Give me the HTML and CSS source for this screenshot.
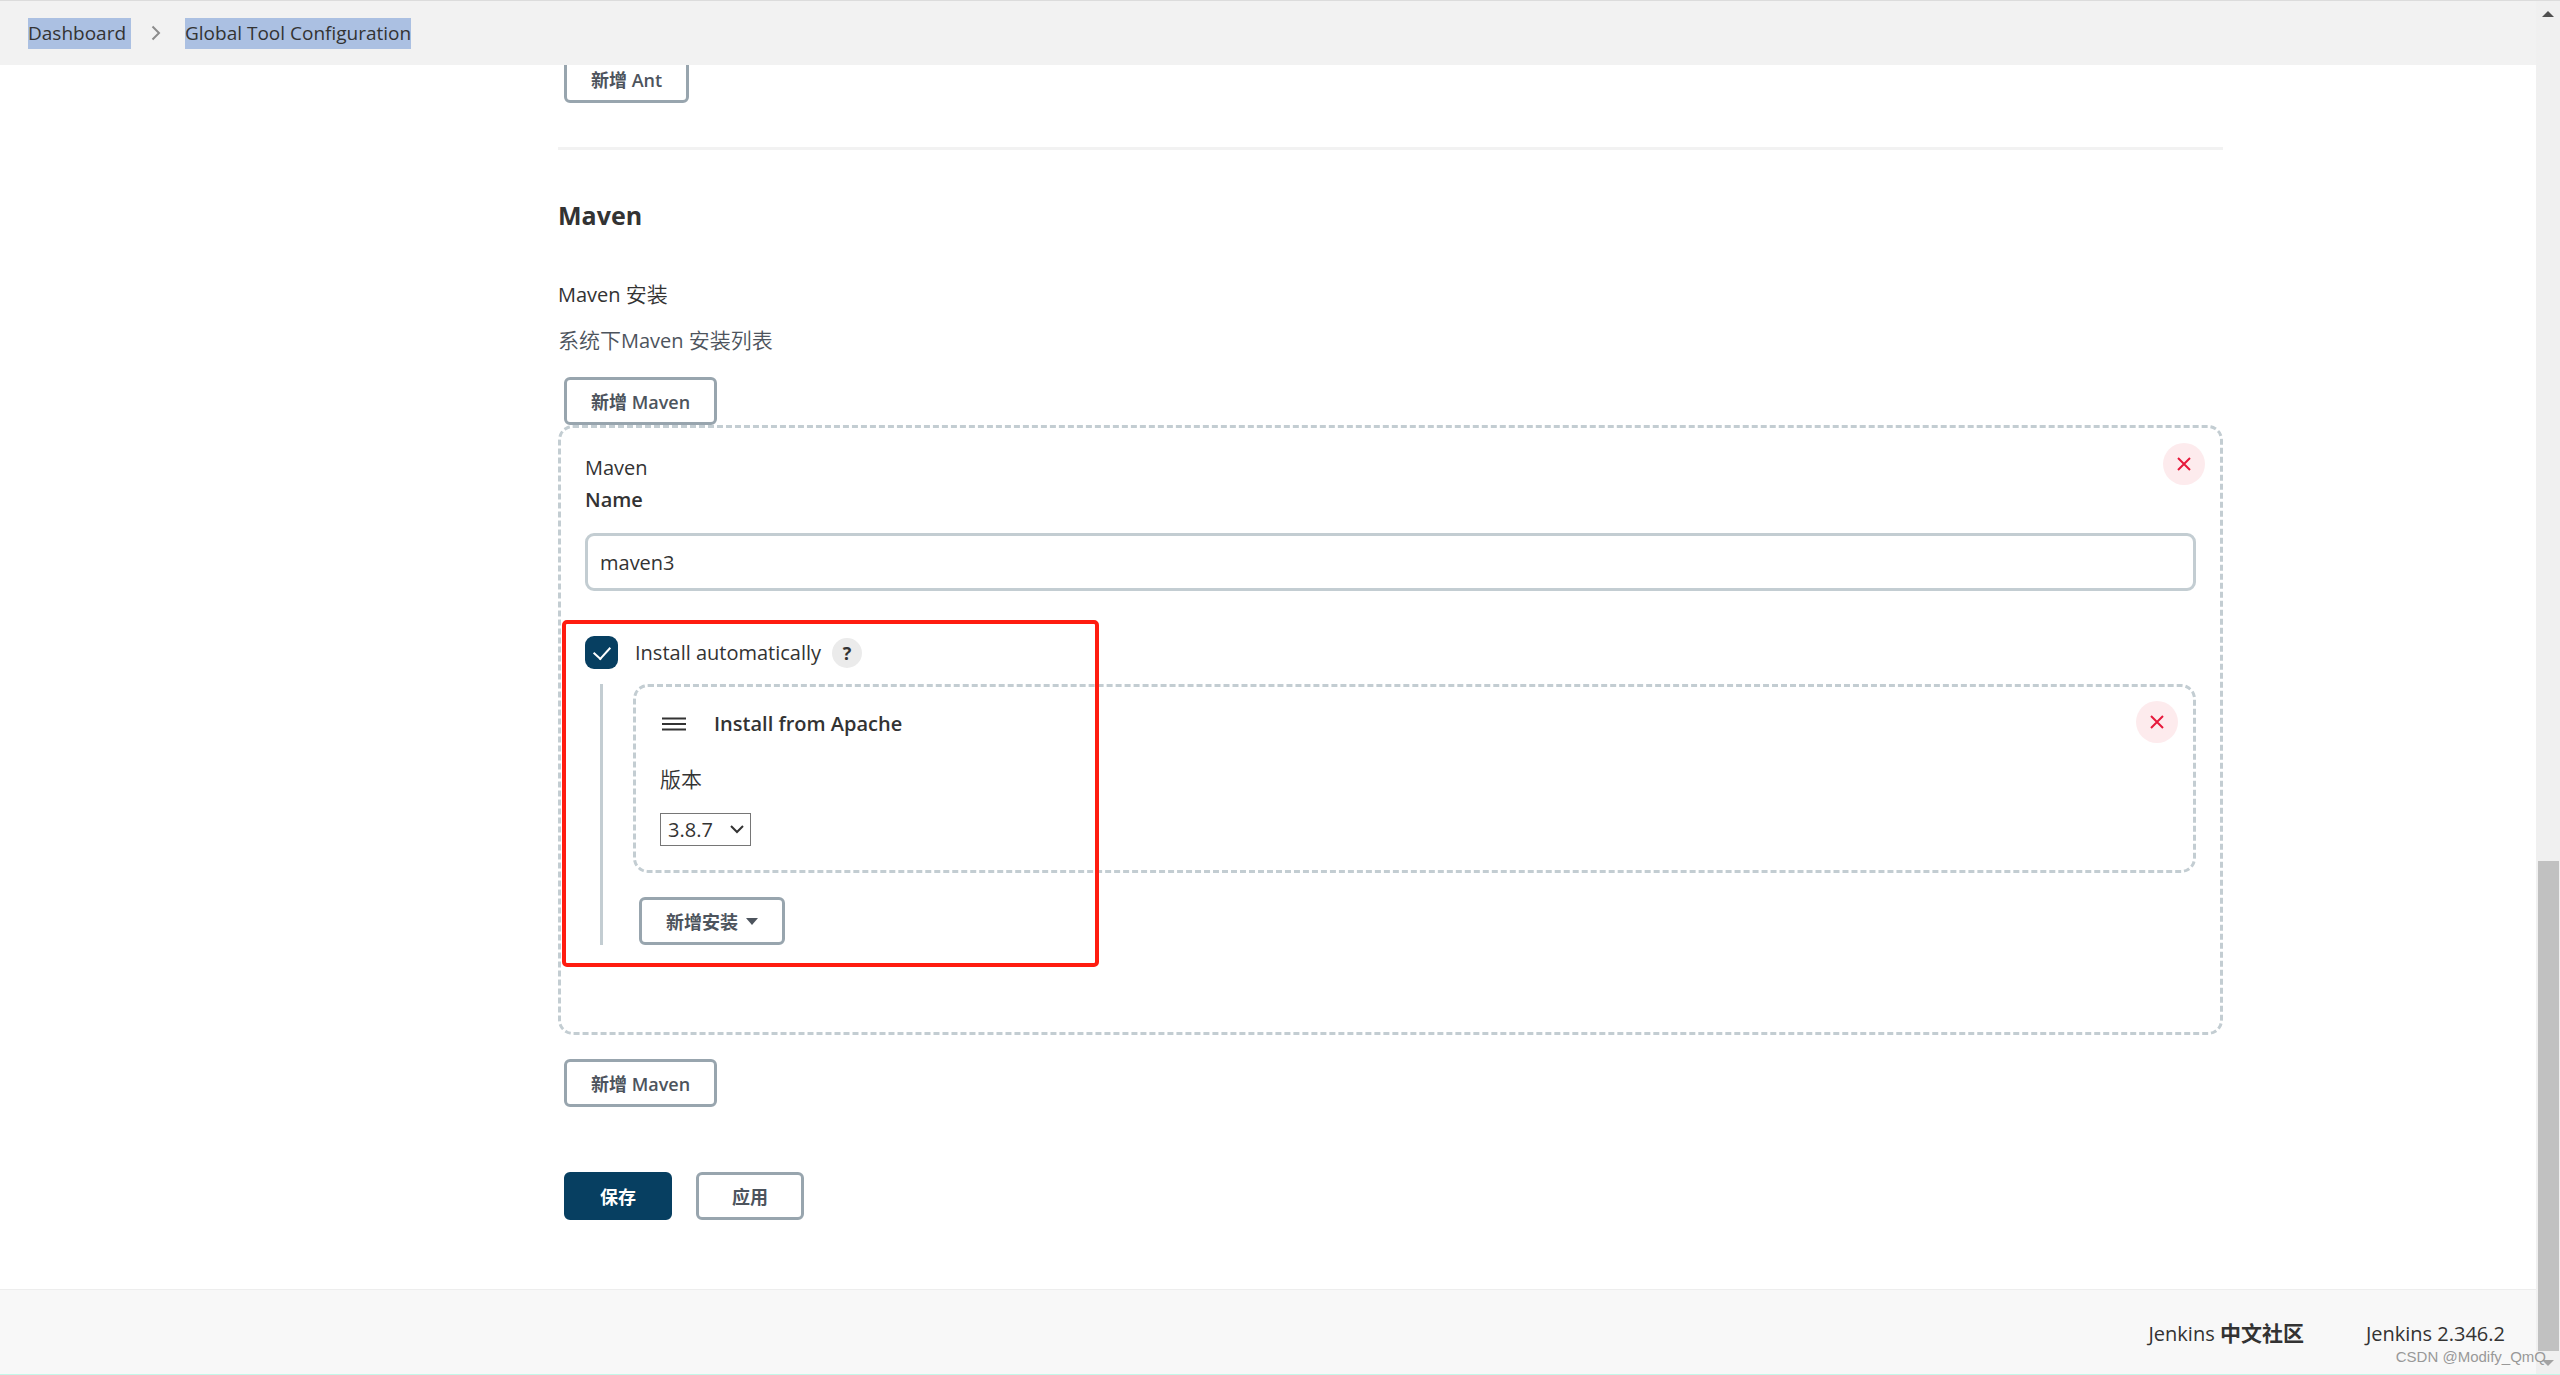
FILE: index.html
```html
<!DOCTYPE html>
<html lang="zh-CN">
<head>
<meta charset="utf-8">
<title>Global Tool Configuration [Jenkins]</title>
<link rel="stylesheet" href="styles.css">
</head>
<body>
<div class="window">
  <div class="page">
    <nav class="breadcrumbs" aria-label="breadcrumb">
      <a class="crumb" href="#">Dashboard&nbsp;</a>
      <svg class="crumb-arrow" viewBox="0 0 10 16" aria-hidden="true"><path d="M1.500 1.500 8 8l-6.500 6.500"/></svg>
      <a class="crumb" href="#">Global Tool Configuration</a>
    </nav>

    <main class="layout">
      <form class="config">
        <div class="row ant-row"><button class="btn" type="button">新增 Ant</button></div>
        <hr class="divider">
        <h2 class="section-title">Maven</h2>
        <h3 class="field-title">Maven <span class="han">安装</span></h3>
        <p class="description"><span class="han">系统下</span>Maven <span class="han">安装列表</span></p>
        <div class="row"><button class="btn" type="button">新增 Maven</button></div>

        <section class="chunk">
          <button class="close" type="button" aria-label="Delete Maven"><svg viewBox="0 0 14 14"><path d="M1 1l12 12M13 1 1 13"/></svg></button>
          <div>Maven</div>
          <label class="label" for="name">Name</label>
          <input class="text-input" id="name" type="text" value="maven3">

          <div class="installer">
            <div class="check-row">
              <input class="checkbox" id="auto" type="checkbox" checked>
              <label class="check-label" for="auto">Install automatically</label>
              <button class="help" type="button" aria-label="Help">?</button>
            </div>
            <div class="nested">
              <section class="chunk chunk-inner">
                <button class="close" type="button" aria-label="Delete installer"><svg viewBox="0 0 14 14"><path d="M1 1l12 12M13 1 1 13"/></svg></button>
                <div class="chunk-header">
                  <svg class="handle" viewBox="0 0 24 14" aria-hidden="true"><path d="M0 1.500h24M0 7h24M0 12.500h24"/></svg>
                  <b>Install from Apache</b>
                </div>
                <label class="version-label" for="version"><span class="han">版本</span></label>
                <div class="select-wrap">
                  <select class="select" id="version"><option>3.8.7</option></select>
                  <svg class="select-arrow" viewBox="0 0 14 9" aria-hidden="true"><path d="M1 1l6 6 6-6"/></svg>
                </div>
              </section>
              <div class="row"><button class="btn btn-menu" type="button">新增安装<span class="caret"></span></button></div>
            </div>
            <div class="highlight"></div>
          </div>
        </section>

        <div class="row"><button class="btn" type="button">新增 Maven</button></div>
        <div class="row actions">
          <button class="btn btn-primary" type="button">保存</button>
          <button class="btn btn-wide" type="button">应用</button>
        </div>
      </form>
    </main>

    <footer class="footer">
      <a href="#">Jenkins <b>中文社区</b></a>
      <a href="#">Jenkins 2.346.2</a>
    </footer>
  </div>
  <div class="scrollbar" aria-hidden="true">
    <span class="arrow-up"></span>
    <span class="thumb"></span>
    <span class="arrow-down"></span>
  </div>
  <div class="watermark">CSDN @Modify_QmQ</div>
</div>
</body>
</html>
```
FILE: styles.css
```css
* { box-sizing: border-box; }

body {
  margin: 0;
  background: #fff;
  color: #333;
  font: 400 20px/32px "Open Sans", "Noto Sans CJK SC", sans-serif;
}

button, input, select { font: inherit; color: inherit; margin: 0; }
a { color: inherit; text-decoration: none; }
svg { display: block; fill: none; stroke: currentColor; }
.han { font-size: 21px; font-weight: 350; line-height: 1; }

.window {
  position: relative;
  display: flex;
  min-height: 100vh;
  border-top: 1px solid #dcdcdc;
  border-bottom: 1px solid #c4f7e8;
}
.page { flex: 1; display: flex; flex-direction: column; }

.breadcrumbs {
  position: relative;
  z-index: 1;
  display: flex;
  align-items: center;
  height: 64px;
  padding: 0 28px;
  background: #f2f2f2;
  font-size: 19px;
  font-weight: 500;
}
.crumb { background: #abc0e2; line-height: 31px; }
.crumb-arrow { width: 10px; height: 16px; margin: 0 24px 0 20px; color: #8c8c8c; stroke-width: 2; }

.layout { flex: 1; display: grid; grid-template-columns: 558fr 1665fr 313fr; }
.config { grid-column: 2; }

.row { display: flex; gap: 24px; padding-left: 6px; }
.ant-row { margin-top: -10px; }
.btn {
  display: flex;
  align-items: center;
  justify-content: center;
  height: 48px;
  padding: 1px 24px 0;
  border: 3px solid #98a5ae;
  border-radius: 6px;
  background: #fff;
  color: #4d545d;
  font-size: 18px;
  font-weight: 600;
}
.btn-primary { width: 108px; border-color: #073f61; background: #073f61; color: #fff; }
.btn-wide { width: 108px; }
.btn-menu { gap: 8px; }
.caret { border: 6px solid transparent; border-top: 7px solid #4d545d; border-bottom: 0; }

.divider { height: 3px; margin: 44px 0 47px; border: 0; background: #f2f2f2; }
.section-title { margin: 0 0 46px; font-size: 25px; font-weight: 700; line-height: 36px; }
.field-title { margin: 0 0 14px; font-size: 20px; font-weight: 500; }
.description { margin: 0 0 20px; color: #4d545d; }

.chunk {
  position: relative;
  margin-bottom: 24px;
  padding: 24px 24px 87px;
  border: 3px dashed #c3cdd2;
  border-radius: 15px;
}
.close {
  position: absolute;
  top: 15px;
  right: 15px;
  display: grid;
  place-items: center;
  width: 42px;
  height: 42px;
  padding: 0;
  border: 0;
  border-radius: 50%;
  background: #fdebed;
  color: #e6193b;
}
.chunk-inner > .close { top: 14px; }
.close svg { width: 14px; height: 14px; stroke-width: 2; }
.label { display: block; margin-bottom: 17px; font-weight: 600; }
.text-input {
  display: block;
  width: 100%;
  height: 58px;
  padding: 1px 12px 0;
  border: 3px solid #c3cdd2;
  border-radius: 9px;
  background: #fff;
}

.installer { position: relative; padding-top: 45px; }
.check-row { display: flex; align-items: center; height: 33px; }
.checkbox {
  appearance: none;
  width: 33px;
  height: 33px;
  margin-right: 17px;
  border-radius: 9px;
  background: #073f61;
  display: grid;
  place-items: center;
}
.checkbox:checked::before {
  content: "";
  width: 8px;
  height: 14px;
  margin-bottom: 4px;
  border: solid #fff;
  border-width: 0 2px 2px 0;
  transform: rotate(42deg);
}
.check-label { font-weight: 500; }
.help {
  width: 30px;
  height: 30px;
  margin-left: 11px;
  padding: 0;
  border: 0;
  border-radius: 50%;
  background: #ebebeb;
  font-size: 18px;
  font-weight: 700;
  line-height: 30px;
}
.nested { margin: 15px 0 0 15px; padding-left: 30px; border-left: 3px solid #c3cdd2; }
.chunk-inner { padding: 21px 24px 24px; }
.chunk-header { display: flex; align-items: center; gap: 28px; margin-bottom: 24px; padding-left: 2px; }
.chunk-header b { font-weight: 600; }
.handle { width: 24px; height: 14px; stroke-width: 2; }
.version-label { display: block; margin-bottom: 17px; }
.select-wrap { position: relative; width: 91px; }
.select {
  appearance: none;
  display: block;
  width: 100%;
  height: 33px;
  padding: 0 7px;
  border: 1px solid #767676;
  border-radius: 0;
  background: #fff;
}
.select-arrow { position: absolute; top: 12px; right: 7px; width: 14px; height: 9px; stroke-width: 2; pointer-events: none; }

.highlight {
  position: absolute;
  top: 29px;
  bottom: -22px;
  left: -23px;
  width: 537px;
  border: 4px solid #ff1c10;
  border-radius: 5px;
  pointer-events: none;
}
.actions { margin-top: 65px; }

.footer {
  display: flex;
  justify-content: flex-end;
  gap: 62px;
  height: 85px;
  padding: 28px 31px 0;
  border-top: 1px solid #ededed;
  background: #f8f8f8;
  font-weight: 500;
}
.footer b { font-size: 21px; line-height: 1; }

.scrollbar {
  display: flex;
  flex-direction: column;
  align-items: center;
  width: 24px;
  padding: 10px 0 8px;
  background: #f0f0f0;
}
.arrow-up { border: 6px solid transparent; border-top: 0; border-bottom-color: #505050; }
.thumb { width: 21px; height: 490px; margin-top: auto; background: #c1c1c1; }
.arrow-down { margin-top: 9px; border: 6px solid transparent; border-bottom: 0; border-top-color: #a3a3a3; }

.watermark {
  position: absolute;
  right: 14px;
  bottom: 8px;
  color: #999;
  font: 15px/18px "Liberation Sans", sans-serif;
}
```
